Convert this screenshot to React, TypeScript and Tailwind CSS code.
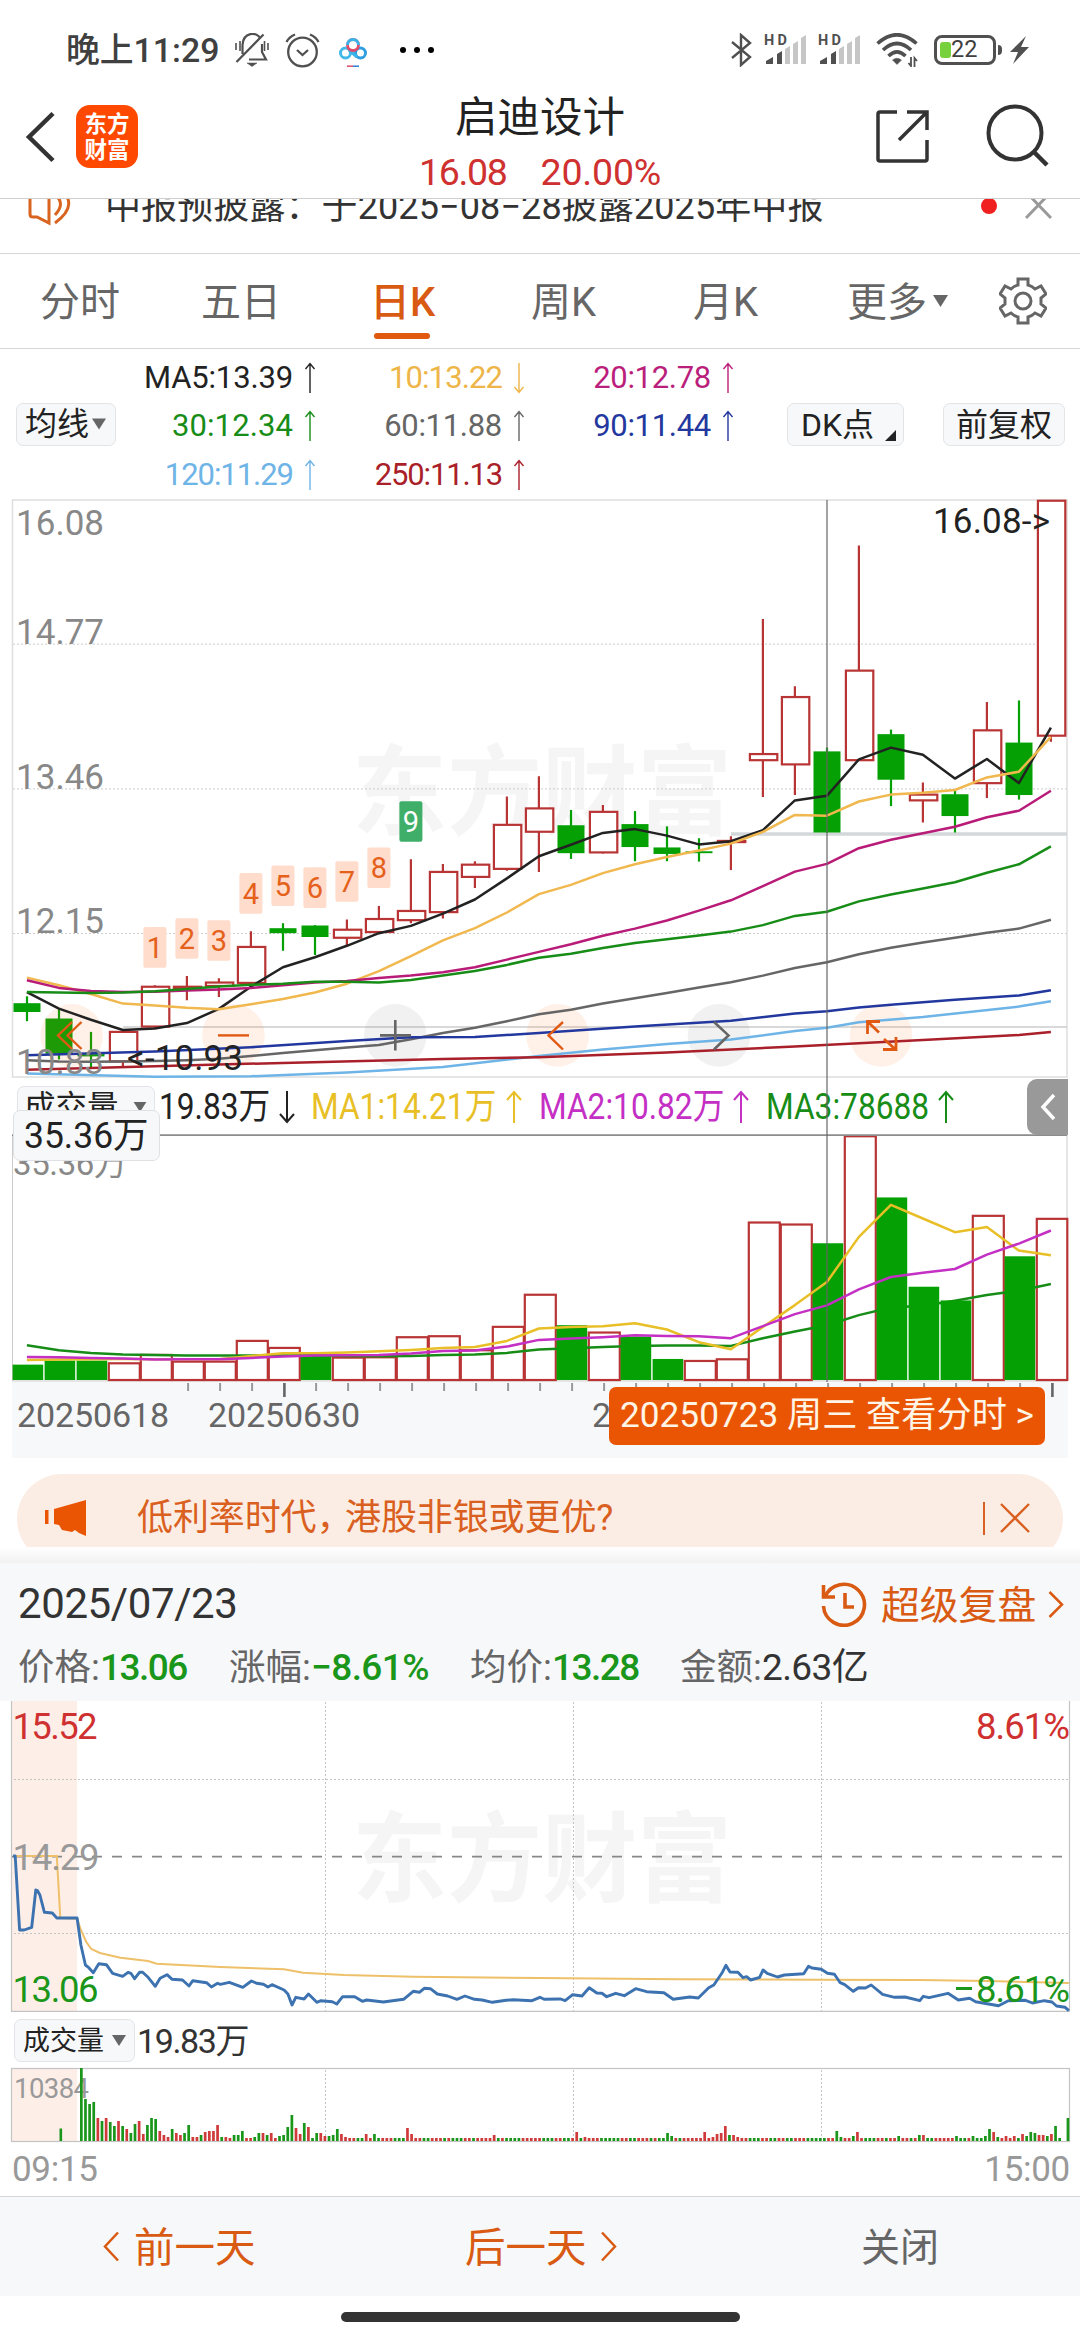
import type { ReactNode } from "react";

const FONT = "font-['Roboto','Noto_Sans_CJK_SC',sans-serif]";
const SVG_FONT = "Roboto, 'Noto Sans CJK SC', sans-serif";

/* ---------- shared chart helpers ---------- */

const cx = (i: number) => 26.9 + 32 * i;
const ky = (v: number) => 490 + v * 0.3827;
const vy = (v: number) => 1060 + v * 0.3344;

type Pair = [number, number];

const spread = (vals: number[]): Pair[] => vals.map((v, i) => [i, v]);
const line = (pts: Pair[], y: (v: number) => number) =>
  pts.map(([i, v]) => `${cx(i).toFixed(1)},${y(v).toFixed(1)}`).join(" ");

type Candle = ["r" | "g", number, number, number, number];

const candles: Candle[] = [
  ["g", 1323, 1341, 1364, 1388],
  ["g", 1357, 1381, 1473, 1488],
  ["g", 1416, 1474, 1480, 1508],
  ["r", 1413, 1416, 1493, 1505],
  ["r", 1294, 1298, 1402, 1408],
  ["r", 1270, 1298, 1303, 1333],
  ["r", 1276, 1287, 1296, 1325],
  ["r", 1153, 1194, 1288, 1290],
  ["g", 1132, 1145, 1158, 1204],
  ["g", 1137, 1138, 1168, 1215],
  ["r", 1122, 1149, 1170, 1190],
  ["r", 1087, 1121, 1155, 1157],
  ["r", 965, 1100, 1124, 1132],
  ["r", 977, 998, 1103, 1120],
  ["r", 970, 979, 1011, 1040],
  ["r", 801, 875, 990, 995],
  ["r", 748, 832, 893, 998],
  ["g", 836, 876, 949, 964],
  ["r", 823, 841, 947, 950],
  ["g", 839, 873, 933, 970],
  ["g", 879, 934, 951, 970],
  ["g", 910, 944, 949, 971],
  ["r", 905, 917, 920, 993],
  ["r", 337, 690, 706, 802],
  ["r", 513, 541, 717, 797],
  ["g", 673, 683, 895, 895],
  ["r", 145, 472, 706, 708],
  ["g", 626, 638, 757, 826],
  ["r", 764, 796, 811, 869],
  ["g", 786, 795, 852, 895],
  ["r", 554, 628, 766, 805],
  ["g", 550, 660, 797, 809],
  ["r", 28, 28, 642, 658],
];

const priceLines: { color: string; pts: Pair[] }[] = [
  {
    color: "#6fb4e6",
    pts: [[0, 1525], [4, 1533], [7, 1532], [10, 1522], [13, 1508], [16, 1479], [18, 1462], [20, 1448], [22, 1436], [24, 1414], [25, 1405], [26, 1391], [28, 1377], [31, 1350], [32, 1336]],
  },
  {
    color: "#a91f2a",
    pts: [[0, 1515], [4, 1506], [8, 1497], [13, 1487], [16, 1482], [20, 1470], [24, 1454], [28, 1437], [31, 1424], [32, 1416]],
  },
  {
    color: "#666666",
    pts: spread([1490, 1493, 1494, 1493, 1492, 1490, 1486, 1479, 1471, 1464, 1457, 1450, 1435, 1419, 1405, 1388, 1370, 1358, 1342, 1328, 1314, 1300, 1286, 1269, 1249, 1234, 1213, 1196, 1182, 1170, 1157, 1146, 1123]),
  },
  {
    color: "#23389e",
    pts: [[0, 1477], [4, 1467], [7, 1456], [10, 1440], [12, 1430], [14, 1429], [16, 1419], [19, 1402], [22, 1387], [24, 1368], [25, 1362], [26, 1352], [27, 1345], [29, 1332], [31, 1321], [32, 1307]],
  },
  {
    color: "#222222",
    pts: spread([1312, 1355, 1384, 1411, 1407, 1393, 1356, 1298, 1247, 1221, 1191, 1158, 1139, 1107, 1070, 1015, 957, 927, 896, 886, 903, 926, 918, 889, 811, 799, 704, 673, 692, 754, 703, 766, 621]),
  },
  {
    color: "#f0b84e",
    pts: spread([1274, 1294, 1317, 1342, 1347, 1353, 1357, 1344, 1330, 1313, 1290, 1257, 1218, 1177, 1145, 1104, 1056, 1032, 1001, 978, 959, 942, 924, 893, 849, 851, 814, 796, 791, 784, 751, 736, 645]),
  },
  {
    color: "#b81b78",
    pts: spread([1281, 1301, 1309, 1312, 1311, 1308, 1305, 1301, 1294, 1287, 1283, 1275, 1269, 1260, 1247, 1227, 1207, 1187, 1165, 1146, 1125, 1099, 1072, 1035, 997, 977, 936, 914, 897, 880, 855, 838, 786]),
  },
  {
    color: "#178d17",
    pts: spread([1312, 1313, 1314, 1313, 1310, 1304, 1297, 1293, 1290, 1285, 1285, 1287, 1280, 1269, 1257, 1241, 1222, 1212, 1197, 1184, 1174, 1164, 1154, 1137, 1113, 1102, 1075, 1057, 1041, 1025, 1000, 978, 931]),
  },
];

const countMarks: { i: number; top: number }[] = [
  { i: 4, top: 1142 },
  { i: 5, top: 1119 },
  { i: 6, top: 1124 },
  { i: 7, top: 1001 },
  { i: 8, top: 981 },
  { i: 9, top: 986 },
  { i: 10, top: 970 },
  { i: 11, top: 934 },
  { i: 12, top: 813 },
];

const volumes: ["r" | "g", number][] = [
  ["g", 911], ["g", 899], ["g", 899], ["r", 907], ["r", 882], ["r", 902], ["r", 902], ["r", 840], ["r", 861], ["g", 882], ["r", 890],
  ["r", 889], ["r", 829], ["r", 826], ["r", 868], ["r", 798], ["r", 702], ["g", 793], ["r", 815], ["g", 827], ["g", 894], ["r", 900],
  ["r", 895], ["r", 486], ["r", 492], ["g", 548], ["r", 228], ["g", 411], ["g", 678], ["g", 719], ["r", 466], ["g", 587], ["r", 475],
];

const slowVolume = [853, 868, 876, 881, 882, 884, 884, 884, 884, 883, 885, 886, 885, 882, 881, 876, 866, 862, 858, 855, 854, 854, 855, 832, 812, 793, 763, 740, 735, 720, 703, 690, 670];

const volumeLines = [
  {
    color: "#e8bf26",
    vals: [897, 896, 895, 894, 895, 895, 895, 885, 877, 877, 875, 871, 867, 861, 858, 840, 803, 798, 796, 787, 806, 844, 865, 798, 733, 664, 529, 433, 474, 515, 499, 570, 584],
  },
  {
    color: "#c42fc4",
    vals: [888, 889, 891, 893, 896, 895, 895, 891, 887, 884, 883, 882, 878, 870, 869, 857, 837, 833, 829, 823, 825, 826, 832, 796, 760, 734, 686, 649, 636, 625, 582, 549, 510],
  },
];

const Watermark = ({ y }: { y: number }) => (
  <text x="352" y={y} fontSize="98" fontWeight="700" fill="#f5f5f5" fontFamily="'Noto Sans CJK SC', sans-serif" textLength="380" lengthAdjust="spacingAndGlyphs">
    东方财富
  </text>
);

function PriceChart() {
  return (
    <svg className="block h-[585px] w-full shrink-0" viewBox="0 495 1080 585" fontFamily={SVG_FONT}>
      <Watermark y={827} />
      <g stroke="#cccccc" strokeWidth="1" strokeDasharray="2 2">
        <path d="M13 644.2H1067M13 788.9H1067M13 933.5H1067" />
      </g>
      <rect x="12.5" y="500" width="1054.5" height="577" fill="none" stroke="#dedede" strokeWidth="1.5" />
      <path d="M123 1027H1067" stroke="#cccccc" strokeWidth="1.5" />
      <path d="M731 834H1067" stroke="#d5d8db" strokeWidth="3.5" />
      {candles.map(([kind, high, top, bot, low], i) => {
        const x = cx(i);
        if (kind === "g") {
          return (
            <g key={i} fill="#04a004">
              <rect x={x - 1} y={ky(high)} width="2.2" height={ky(low) - ky(high)} />
              <rect x={x - 13.4} y={ky(top)} width="27" height={ky(bot) - ky(top)} />
            </g>
          );
        }
        return (
          <g key={i} stroke="#b93434" strokeWidth="2.2" fill="#ffffff">
            <path d={`M${x} ${ky(high)}V${ky(top)}M${x} ${ky(bot)}V${ky(low)}`} />
            <rect x={x - 13} y={ky(top)} width="27.4" height={ky(bot) - ky(top)} />
          </g>
        );
      })}
      {[71.6, 233.5, 395.3, 557.6, 719, 881].map((x, i) => (
        <circle key={x} cx={x} cy="1035.4" r="31.3" fill={i === 2 || i === 4 ? "#666666" : "#ff6a1a"} fillOpacity={i === 2 || i === 4 ? 0.09 : 0.1} />
      ))}
      {priceLines.map(({ color, pts }) => (
        <polyline key={color} points={line(pts, ky)} fill="none" stroke={color} strokeWidth="2.5" strokeLinejoin="round" />
      ))}
      <g fill="none" stroke="#e05a14" strokeWidth="2.4">
        <path d="M72 1022L58 1035.500L72 1049M81.500 1022L67.500 1035.500L81.500 1049" />
        <path d="M218 1035.400H249" />
        <path d="M563 1022L548.500 1035.400L563 1049.500" />
        <path strokeWidth="2.8" d="M880 1021.500H867.500V1034M867.500 1021.500L879 1032.500M884 1039L895 1049M883 1049.500H896V1037" />
      </g>
      <g fill="none" stroke="#666666" strokeWidth="2.6">
        <path d="M380 1035.400H411M395.300 1020V1050.500" />
        <path d="M714 1022L728.500 1035.400L714 1049.500" />
      </g>
      {countMarks.map(({ i, top }, n) => (
        <g key={i}>
          <rect x={cx(i) - 11.5} y={ky(top)} width="23" height="40.6" rx="2" fill={n === 8 ? "#3fae68" : "#ffdccb"} />
          <text x={cx(i)} y={ky(top) + 31} fontSize="29" textAnchor="middle" fill={n === 8 ? "#ffffff" : "#e5601a"}>
            {n + 1}
          </text>
        </g>
      ))}
      <g fontSize="35" fill="#888888">
        <text x="16" y="535" textLength="88">16.08</text>
        <text x="16" y="644" textLength="88">14.77</text>
        <text x="16" y="788.500" textLength="88">13.46</text>
        <text x="16" y="933" textLength="88">12.15</text>
        <text x="16" y="1073.500" textLength="88">10.83</text>
      </g>
      <g fontSize="35" fill="#222222">
        <text x="127" y="1069.800" textLength="116">{"<-10.93"}</text>
        <text x="933" y="532.500" textLength="117">{"16.08->"}</text>
      </g>
    </svg>
  );
}

const volumeBar = (kind: "r" | "g", top: number, i: number) => {
  const x = 11.8 + 32 * i;
  return kind === "g" ? (
    <rect key={i} x={x + 0.8} y={vy(top)} width="30.6" height={vy(957) - vy(top)} fill="#04a004" />
  ) : (
    <rect key={i} x={x + 1} y={vy(top)} width={i === 32 ? 30.5 : 31} height={vy(957) - vy(top)} fill="#ffffff" stroke="#b93434" strokeWidth="2.2" />
  );
};

function VolumeChart() {
  return (
    <svg className="block h-[248px] w-full shrink-0" viewBox="0 1134 1080 248" fontFamily={SVG_FONT}>
      <path d="M12.500 1135V1381H1067V1135" fill="none" stroke="#cccccc" strokeWidth="1" />
      <text x="13" y="1175" fontSize="33" fill="#888888" textLength="114">35.36万</text>
      {volumes.map(([kind, top], i) => (kind === "r" ? volumeBar(kind, top, i) : null))}
      <polyline points={line(spread(slowVolume), vy)} fill="none" stroke="#178d17" strokeWidth="2.5" strokeLinejoin="round" />
      {volumes.map(([kind, top], i) => (kind === "g" ? volumeBar(kind, top, i) : null))}
      {volumeLines.map(({ color, vals }) => (
        <polyline key={color} points={line(spread(vals), vy)} fill="none" stroke={color} strokeWidth="2.5" strokeLinejoin="round" />
      ))}
      <path d="M12 1135.200H1067" stroke="#8c8c8c" strokeWidth="1.800" />
    </svg>
  );
}

/* ---------- intraday data ---------- */

const intraday: Pair[] = [
  [38, 498], [44, 498], [57, 720], [70, 720], [92, 712], [104, 600], [109, 602], [116, 615], [129, 667], [152, 669], [165, 684], [224, 684],
  [235, 765], [248, 825], [258, 833], [271, 848], [287, 821], [309, 824], [327, 850], [356, 859], [372, 847], [380, 850], [391, 866], [405, 847],
  [414, 847], [430, 862], [451, 889], [465, 865], [485, 854], [500, 868], [530, 870], [549, 888], [560, 872], [600, 878], [614, 891], [632, 880],
  [640, 883], [666, 877], [705, 892], [730, 873], [745, 880], [765, 883], [778, 891], [790, 884], [825, 900], [836, 912], [848, 945], [859, 922],
  [883, 927], [896, 912], [920, 937], [932, 932], [965, 935], [978, 942], [995, 920], [1030, 920], [1052, 934], [1065, 930], [1113, 936],
  [1172, 928], [1200, 904], [1218, 907], [1232, 895], [1250, 896], [1270, 912], [1300, 918], [1327, 928], [1350, 918], [1378, 928], [1400, 930],
  [1430, 937], [1470, 931], [1490, 929], [1545, 932], [1568, 922], [1580, 928], [1628, 927], [1641, 932], [1663, 914], [1690, 918], [1711, 893],
  [1733, 909], [1748, 910], [1762, 920], [1788, 910], [1813, 917], [1846, 896], [1878, 905], [1928, 908], [1955, 928], [2003, 921], [2028, 924],
  [2058, 893], [2073, 885], [2096, 850], [2108, 826], [2120, 846], [2143, 847], [2158, 863], [2168, 860], [2180, 870], [2206, 862], [2216, 840],
  [2228, 850], [2258, 861], [2278, 855], [2334, 851], [2348, 829], [2358, 834], [2385, 838], [2403, 850], [2423, 853], [2440, 878], [2453, 884],
  [2478, 904], [2493, 893], [2513, 894], [2530, 885], [2563, 913], [2598, 922], [2628, 921], [2671, 932], [2681, 919], [2698, 923], [2753, 910],
  [2783, 930], [2816, 925], [2833, 935], [2900, 947], [2928, 932], [2978, 931], [2998, 939], [3033, 932], [3055, 936], [3068, 948], [3093, 952], [3104, 962],
];

const average: Pair[] = [
  [40, 498], [165, 498], [175, 684], [224, 686], [235, 720], [250, 755], [265, 777], [290, 789], [350, 803], [430, 813], [455, 821], [640, 831],
  [825, 838], [880, 848], [1000, 855], [1200, 860], [1568, 864], [1968, 868], [2368, 869], [2668, 870], [2868, 873], [3104, 879],
];

const minutePath = (pts: Pair[]) => pts.map(([x, y]) => `${(x / 2.904).toFixed(1)},${(1690 + y / 3).toFixed(1)}`).join(" ");

function IntradayChart() {
  return (
    <svg className="block h-[313px] w-full shrink-0" viewBox="0 1701 1080 313" fontFamily={SVG_FONT}>
      <rect x="12" y="1701" width="65" height="310" fill="#fdeee8" />
      <Watermark y={1894} />
      <g stroke="#c4c4c4" strokeWidth="1" strokeDasharray="2 2">
        <path d="M14 1779.500H1068M14 1933.500H1068" />
        <path d="M325.500 1702V2011M573.500 1702V2011M821.500 1702V2011" />
      </g>
      <path d="M12 1856.700H1068" stroke="#888888" strokeWidth="1.800" strokeDasharray="10 10" />
      <path d="M11.500 1701V2011.300H1069.500V1701" fill="none" stroke="#c4c4c4" strokeWidth="1.200" />
      <polyline points={minutePath(average)} fill="none" stroke="#eec069" strokeWidth="2" />
      <polyline points={minutePath(intraday)} fill="none" stroke="#3d72b0" strokeWidth="2.900" strokeLinejoin="round" />
      <g fontSize="36.500">
        <text x="12.500" y="1739" fill="#cf3030" textLength="85">15.52</text>
        <text x="12.500" y="1870" fill="#999999" textLength="87">14.29</text>
        <text x="12.500" y="2001.500" fill="#1a961a" textLength="86">13.06</text>
        <text x="976" y="1739" fill="#cf3030" textLength="94">8.61%</text>
        <text x="976" y="2001.500" fill="#1a961a" textLength="94">8.61%</text>
      </g>
      <path d="M956 1988.500H972" stroke="#1a961a" strokeWidth="3" />
    </svg>
  );
}

const openingBars = "73g 42g 37g 39g 23r 20g 23r 19g 15g 20r 15g 12r 8g 17g 20r 7r 16g 23g 22g 10r 6r 4r 12g 8r 6r 8g 16g 4r 4r 6g 9r 10r 10r 16r 4g 4r 3r 6g 6g 10g 3r 3r 4g 8g 8r 6g 8r 3r 5g 6g 14g 26g 13r 7r 18g 14r 3g 8g 8r 5r 5g 6g 12g 7r 4r"
  .split(" ");

const spikes: Record<number, string> = {
  69: "7r", 71: "7g", 79: "13r", 80: "7r", 100: "6r", 120: "9r", 122: "4r", 142: "8g", 143: "5g", 151: "9r", 153: "4r", 154: "7r", 155: "8r",
  156: "15r", 157: "6g", 158: "6r", 159: "4r", 183: "10g", 184: "4g", 187: "5g", 188: "9r", 198: "5g", 203: "6g", 204: "6r", 212: "5g", 216: "5g",
  219: "5g", 220: "12g", 221: "9r", 222: "4g", 224: "5r", 226: "5r", 228: "7r", 229: "5g", 230: "9g", 231: "8g", 232: "6r", 233: "6r", 234: "5g",
  235: "7r", 236: "15g", 237: "3g", 239: "23g",
};

const redRuns = "rgrggggrrrrrgggrrggrrggrrrgggggrrggrrrgrgggrrgrrrr";

function MinuteVolume() {
  const bars = Array.from({ length: 240 }, (_, i) => openingBars[i] ?? spikes[i] ?? (i === 238 ? "0g" : `3${redRuns[i % redRuns.length]}`));
  return (
    <svg className="block h-[76px] w-full shrink-0" viewBox="0 2067 1080 76" fontFamily={SVG_FONT}>
      <rect x="12" y="2069" width="65" height="72" fill="#fdeee8" />
      <path d="M325.500 2070V2141M573.500 2070V2141M821.500 2070V2141" stroke="#c4c4c4" strokeDasharray="2 2" />
      <rect x="11.500" y="2068.500" width="1058" height="73" fill="none" stroke="#c4c4c4" strokeWidth="1.200" />
      <text x="14" y="2098" fontSize="27.500" fill="#999999" textLength="75">10384</text>
      <rect x="59.500" y="2128.500" width="2.600" height="12.500" fill="#1a961a" />
      {bars.map((b, i) => {
        const h = parseInt(b, 10);
        return <rect key={i} x={80 + i * 4.128} y={2141 - h} width="2.700" height={h} fill={b.endsWith("r") ? "#cf3b3b" : "#1a961a"} />;
      })}
    </svg>
  );
}

/* ---------- small icons ---------- */

const Arrow = ({ up = true, className = "" }: { up?: boolean; className?: string }) => (
  <svg className={className} viewBox="0 0 12 32" fill="none" stroke="currentColor" strokeWidth="1.400">
    {up ? <path d="M6 31V2M1.500 7L6 1.500L10.500 7" /> : <path d="M6 1V30M1.500 25L6 30.500L10.500 25" />}
  </svg>
);

const WideArrow = ({ up = true }: { up?: boolean }) => (
  <svg className="h-[34px] w-[16px]" viewBox="0 0 16 34" fill="none" stroke="currentColor" strokeWidth="2">
    {up ? <path d="M8 33V2M1 10L8 2L15 10" /> : <path d="M8 1V32M1 24L8 32L15 24" />}
  </svg>
);

const Triangle = ({ className }: { className: string }) => (
  <svg className={className} viewBox="0 0 14 11" fill="#666666">
    <path d="M0 0H14L7 11Z" />
  </svg>
);

const Signal = () => (
  <svg className="h-[34px] w-[42px]" viewBox="0 0 42 34">
    <text x="0" y="11.500" fontSize="14.500" fontWeight="700" fill="#505050" fontFamily="Roboto, sans-serif" textLength="23">HD</text>
    <path d="M2 31V28L9 24V31ZM13 31V21L18 18V31Z" fill="#505050" />
    <path d="M21 31V16L26 13V31ZM29 31V11L34 8V31ZM37 31V5L42 2V31Z" fill="#c6c6c6" />
  </svg>
);

function StatusBar() {
  return (
    <div className="flex h-[100px] shrink-0 items-center pl-[66px] text-[#404040]">
      <div className="w-[169px] pt-[2px] text-[33.800px] leading-[34px] font-medium whitespace-nowrap">晚上11:29</div>
      <svg className="mr-4 h-[34px] w-[34px]" viewBox="0 0 34 34" fill="none" stroke="#505050" strokeWidth="2.200">
        <path d="M7.500 21V12C8 -1 22 -1.500 25 5M27 11V19L31 26.500H14M1.500 29L28.500 1.500" />
        <path d="M1 10V17M5 8V18M33 10V17M29.500 8V18" strokeWidth="1.600" />
        <path d="M12 30H22L17 33.500Z" fill="#505050" strokeWidth="0.500" />
      </svg>
      <svg className="mr-4 h-[35px] w-[35px]" viewBox="0 0 35 35" fill="none" stroke="#505050" strokeWidth="2.300">
        <circle cx="17.500" cy="19" r="14.300" />
        <path d="M12 17L17.500 22L23 17M1.500 9Q4 4 10 1.500M33.500 9Q31 4 25 1.500" />
      </svg>
      <svg className="h-[34px] w-[34px]" viewBox="0 0 34 34" fill="none" strokeWidth="3">
        <circle cx="9.500" cy="20" r="5" stroke="#42b9ea" />
        <circle cx="24.500" cy="20" r="5" stroke="#2f9fe0" />
        <path d="M13 17L21 24" stroke="#3ab4e8" />
        <circle cx="17" cy="12" r="5.500" stroke="#e04a6c" strokeWidth="2.800" />
        <path d="M11.500 12A5.500 5.500 0 0 1 22.500 12" stroke="#3ab4e8" />
        <path d="M11 33.200H17" stroke="#e04a6c" strokeWidth="1.500" />
        <path d="M17 33.200H23" stroke="#2f7fd0" strokeWidth="1.500" />
      </svg>
      <div className="ml-[30px] flex w-[34px] justify-between">
        <i className="h-1.5 w-1.5 rounded-full bg-black" />
        <i className="h-1.5 w-1.5 rounded-full bg-black" />
        <i className="h-1.5 w-1.5 rounded-full bg-black" />
      </div>
      <div className="ml-auto flex items-center pr-[51px]">
        <svg className="mr-3 h-[34px] w-[21px]" viewBox="0 0 21 34" fill="none" stroke="#505050" strokeWidth="2.400">
          <path d="M1 9L19 24L10 32V2L19 10L1 25" />
        </svg>
        <Signal />
        <div className="w-3" />
        <Signal />
        <svg className="ml-[16px] h-[34px] w-[42px]" viewBox="0 0 42 34" fill="none" stroke="#505050" strokeWidth="3.600">
          <path d="M1.500 10.500Q21 -7 40.500 10.500M7 17Q21 4 35 17M12.500 23Q21 14.500 29.500 23" />
          <path d="M16.500 27Q21 23.500 25.500 27L21 31.500Z" fill="#505050" strokeWidth="0.500" />
          <path d="M35 24V33L32.500 30M38.500 34V25L41 28" strokeWidth="1.800" />
        </svg>
        <div className="ml-4 flex h-[30px] w-[62px] items-center rounded-[8px] border-[3.500px] border-[#505050] pl-[3px] leading-none text-[#404040]">
          <span className="h-4 w-[11px] rounded-[3px] bg-[#76d13c]" />
          <span className="text-[23.500px]">22</span>
        </div>
        <span className="ml-0.5 h-2.5 w-[4px] rounded-r bg-[#505050]" />
        <svg className="ml-2 h-[28px] w-[19px]" viewBox="0 0 19 28" fill="#505050">
          <path d="M16 0L0 16H8L3 28L19 11H11Z" />
        </svg>
      </div>
    </div>
  );
}

function Header() {
  return (
    <div className="flex h-[99px] shrink-0 items-start border-b border-[#cfcfcf] pl-[25px]">
      <svg className="mt-[11px] h-[52px] w-[30px]" viewBox="0 0 30 52" fill="none" stroke="#333333" strokeWidth="4.500">
        <path d="M28 2.500L4 26L28 49.500" />
      </svg>
      <div className="mt-[5px] ml-[21px] flex h-[63px] w-[62px] flex-col items-center justify-center rounded-[14px] bg-[#ff4800] text-[22.500px] leading-[26px] font-bold text-white">
        <span>东方</span>
        <span>财富</span>
      </div>
      <div className="ml-[240px] flex w-[324px] flex-col items-center">
        <div className="-mt-[6px] text-[42.500px] leading-[48px] whitespace-nowrap text-[#222222]">启迪设计</div>
        <div className="mt-[8px] flex gap-[34px] text-[37.500px] leading-[44px] text-[#cf3030]">
          <span className="tracking-[-1.300px]">16.08</span>
          <span className="tracking-[-0.200px]">20.00%</span>
        </div>
      </div>
      <svg className="mt-[8px] ml-[173px] h-[56px] w-[56px]" viewBox="0 0 56 56" fill="none" stroke="#333333" strokeWidth="3.500">
        <path d="M22 4H5Q3 4 3 6V51Q3 53 5 53H50Q52 53 52 51V32M32 4H52V22M52 4L24 32" />
      </svg>
      <svg className="mt-[3px] ml-[55px] h-[66px] w-[64px]" viewBox="0 0 64 66" fill="none" stroke="#333333" strokeWidth="4">
        <circle cx="29" cy="30" r="26.500" />
        <path d="M48 49L61 62" strokeWidth="4.500" />
      </svg>
    </div>
  );
}

function Notice() {
  return (
    <div className="h-[55px] shrink-0 overflow-hidden border-b border-[#d6d6d6]">
      <div className="-mt-[17px] flex h-[48px] items-center pl-[28px]">
        <svg className="mr-[30px] h-[44px] w-[47px]" viewBox="0 0 47 44" fill="none" stroke="#d96420" strokeWidth="3">
          <path d="M2 10V30Q2 33 5 33H9L21 39V1L9 9H2" />
          <path d="M27 11Q38 19 27 31M28 2Q54 19 27 39" />
        </svg>
        <div className="w-[882px] pt-[2px] text-[36px] leading-[48px] tracking-[0.100px] whitespace-nowrap text-[#333333]">中报预披露：于2025−08−28披露2025年中报</div>
        <i className="ml-[-6px] h-4 w-4 rounded-full bg-[#f02020]" />
        <svg className="ml-[28px] h-[28px] w-[27px]" viewBox="0 0 27 28" fill="none" stroke="#999999" strokeWidth="3">
          <path d="M1 0L26 26M26 0L1 26" />
        </svg>
      </div>
    </div>
  );
}

function Tabs() {
  return (
    <div className="flex h-[95px] shrink-0 items-center border-b border-[#d6d6d6] pt-[4px] pl-[40px] text-[40px] leading-[50px] whitespace-nowrap text-[#666666]">
      <div className="w-[161px]">分时</div>
      <div className="w-[169px]">五日</div>
      <div className="relative w-[161px] font-medium text-[#d95a12]">
        日K
        <i className="absolute top-[55px] left-[4px] h-[6px] w-[56px] rounded-full bg-[#e0590f]" />
      </div>
      <div className="w-[162px]">周K</div>
      <div className="w-[154px]">月K</div>
      <div className="w-[86px]">更多</div>
      <Triangle className="mb-[4px] h-[12px] w-[15px]" />
      <svg className="mb-[4px] ml-[51px] h-[48px] w-[48px]" viewBox="0 0 48 48" fill="none" stroke="#666666" strokeWidth="3">
        <path d="M19 2H29V8Q33 9 36 12L42 9L47 17L42 21V27L47 31L42 39L36 36Q33 39 29 40V46H19V40Q15 39 12 36L6 39L1 31L6 27V21L1 17L6 9L12 12Q15 9 19 8Z" />
        <circle cx="24" cy="24" r="8" />
      </svg>
    </div>
  );
}

const averages = [
  ["MA5:13.39", "text-[#222222] tracking-[-0.150px]", 1],
  ["10:13.22", "text-[#eeb548] tracking-[-0.900px]", 0],
  ["20:12.78", "text-[#bb1f7c] tracking-[-0.300px]", 1],
  ["30:12.34", "text-[#178d17] tracking-[0.100px]", 1],
  ["60:11.88", "text-[#666666] tracking-[-0.300px]", 1],
  ["90:11.44", "text-[#23389e] tracking-[-0.300px]", 1],
  ["120:11.29", "text-[#6fb4e6] tracking-[-1.050px]", 1],
  ["250:11.13", "text-[#a91f2a] tracking-[-1.150px]", 1],
] as const;

const Chip = ({ className, children }: { className: string; children: ReactNode }) => (
  <div className={`flex items-center rounded-[7px] border border-[#e2e4e7] bg-[#f7f8fa] text-[32px] leading-[40px] whitespace-nowrap text-[#222222] ${className}`}>{children}</div>
);

function AverageLegend() {
  return (
    <div className="flex h-[146px] shrink-0 items-center pl-[16px]">
      <Chip className="mt-[4px] h-[43px] w-[100px] pl-[8px]">
        均线
        <Triangle className="ml-[3px] h-[12px] w-[14px]" />
      </Chip>
      <div className="mt-[8px] grid w-[618px] grid-cols-[200px_209px_209px] grid-rows-[48px_49px_48px]">
        {averages.map(([label, color, up]) => (
          <div key={label} className={`flex items-center justify-end gap-[11px] text-[31px] leading-[40px] ${color}`}>
            {label}
            <Arrow up={up === 1} className="h-[32px] w-[12px]" />
          </div>
        ))}
      </div>
      <Chip className="mt-[5px] ml-[53px] h-[43px] w-[117px] pl-[13px]">
        DK点
        <svg className="mt-[22px] ml-[11px] h-[11px] w-[11px]" viewBox="0 0 11 11" fill="#222222">
          <path d="M11 0V11H0Z" />
        </svg>
      </Chip>
      <Chip className="mt-[5px] ml-[39px] h-[43px] w-[122px] justify-center">前复权</Chip>
    </div>
  );
}

const volumeLegend = [
  { text: "19.83万", up: false, cls: "text-[#222222] w-[152px]", label: "w-[120px]" },
  { text: "MA1:14.21万", up: true, cls: "text-[#e8bf26] w-[228px]", label: "w-[195px]" },
  { text: "MA2:10.82万", up: true, cls: "text-[#c42fc4] w-[227px]", label: "w-[194px]" },
  { text: "MA3:78688", up: true, cls: "text-[#178d17] w-[190px]", label: "w-[172px]" },
];

function VolumeLegend() {
  return (
    <div className="flex h-[54px] shrink-0 items-center pl-[17px]">
      <div className="mt-[6px] flex h-[48px] w-[138px] items-start rounded-[7px] border border-[#e2e4e7] bg-[#f7f8fa] pl-[6px] text-[31.500px] leading-[42px] whitespace-nowrap text-[#222222]">
        成交量
        <Triangle className="mt-[15px] ml-[14px] h-[10px] w-[14px]" />
      </div>
      <div className="flex pl-[4px]">
        {volumeLegend.map(({ text, up, cls, label }) => (
          <div key={text} className={`flex items-center ${cls}`}>
            <div className={`shrink-0 text-[36px] leading-[50px] whitespace-nowrap ${label}`}>
              <span className="inline-block origin-left scale-x-[0.880]">{text}</span>
            </div>
            <WideArrow up={up} />
          </div>
        ))}
      </div>
    </div>
  );
}

function DateAxis() {
  return (
    <div className="relative ml-[12px] h-[76px] w-[1056px] shrink-0 bg-[#f7f8fa]">
      <svg className="block h-[15px] w-full" viewBox="12 1382 1056 15">
        {Array.from({ length: 28 }, (_, k) => {
          const i = k + 5;
          const major = i === 8 || i === 32;
          return <rect key={i} x={cx(i) + 0.2} y="1383" width={major ? 2.600 : 2} height={major ? 14 : 8} fill={major ? "#666666" : "#999999"} />;
        })}
      </svg>
      <div className="-mt-[2px] flex pl-[5px] text-[34px] leading-[40px] tracking-[-0.100px] text-[#666666]">
        <span className="w-[191px]">20250618</span>
        <span className="w-[384px]">20250630</span>
        <span>2</span>
      </div>
      <div className="absolute top-[5px] left-[597px] flex h-[58px] w-[436px] items-center justify-center rounded-[7px] bg-[#ea5504] pb-[3px] text-[35.200px] leading-[50px] whitespace-nowrap text-[#fff5e6]">
        20250723 周三 查看分时 &gt;
      </div>
    </div>
  );
}

function KLinePanel() {
  return (
    <div className="relative flex shrink-0 flex-col">
      <PriceChart />
      <VolumeLegend />
      <VolumeChart />
      <div className="absolute top-[5px] left-[826px] h-[882px] w-[1.500px] bg-[#666666]/60" />
      <div className="absolute top-[615px] left-[13px] flex h-[51px] w-[147px] items-center rounded-[7px] border border-[#dfe1e4] bg-[#f7f8fa] pl-[10px] text-[36px] leading-[50px] text-[#222222]">
        <span className="inline-block origin-left scale-x-[0.985] whitespace-nowrap">35.36万</span>
      </div>
      <div className="absolute top-[584px] left-[1027px] flex h-[56px] w-[41px] items-center justify-center rounded-l-[10px] bg-[#999999]">
        <svg className="h-[28px] w-[16px]" viewBox="0 0 16 28" fill="none" stroke="#ffffff" strokeWidth="3.500">
          <path d="M14 2L3 14L14 26" />
        </svg>
      </div>
      <DateAxis />
    </div>
  );
}

function Banner() {
  return (
    <div className="mx-[17px] mt-[16px] h-[73px] shrink-0 overflow-hidden">
      <div className="flex h-[90px] items-center rounded-full bg-[#fcede4] pb-[2px] pl-[28px] text-[#d96020]">
        <svg className="h-[36px] w-[41px]" viewBox="0 0 41 36" fill="#ea5504">
          <path d="M0 10H3.500V24H0ZM9 9L41 0V36L34 33L30 30L27 32L17 30L14 25L9 24Z" />
        </svg>
        <div className="ml-[51px] flex w-[846px] text-[36px] leading-[48px] tracking-[-0.100px] whitespace-nowrap">
          <span className="w-[208px]">低利率时代，</span>
          <span>港股非银或更优?</span>
        </div>
        <i className="h-[33px] w-[1.500px] bg-[#d96020]" />
        <svg className="ml-[15px] h-[30px] w-[30px]" viewBox="0 0 30 30" fill="none" stroke="#d96020" strokeWidth="2.400">
          <path d="M1 1L29 29M29 1L1 29" />
        </svg>
      </div>
    </div>
  );
}

const Stat = ({ name, value, className, color }: { name: string; value: string; className: string; color: string }) => (
  <div className={`flex items-center whitespace-nowrap ${className}`}>
    <span className="w-[82px] text-[36.500px] text-[#666666]">{name}:</span>
    <span className={`text-[37px] ${color}`}>{value}</span>
  </div>
);

function DayHeader() {
  return (
    <div className="shrink-0">
      <div className="h-[16px] bg-gradient-to-b from-white to-[#f1f1f2]" />
      <div className="h-[138px] bg-[#f7f8fa] pt-[15px]">
        <div className="flex h-[52px] items-center pl-[18px]">
          <div className="w-[803px] text-[42px] leading-[50px] tracking-[-0.400px] text-[#333333]">2025/07/23</div>
          <svg className="h-[46px] w-[46px]" viewBox="0 0 46 46" fill="none" stroke="#d95a12" strokeWidth="3.600">
            <path d="M4 16A20.500 20.500 0 1 1 2.500 25M2.500 4V16H14M24 12V26H33" />
          </svg>
          <div className="ml-[14px] w-[167px] pt-[3px] text-[38.800px] leading-[50px] whitespace-nowrap text-[#d95a12]">超级复盘</div>
          <svg className="h-[27px] w-[16px]" viewBox="0 0 16 27" fill="none" stroke="#d95a12" strokeWidth="2.500">
            <path d="M1.500 1L14 13.500L1.500 26" />
          </svg>
        </div>
        <div className="mt-[13px] flex h-[50px] items-center pl-[18px] leading-[50px]">
          <Stat name="价格" value="13.06" className="w-[211px]" color="font-medium tracking-[-1.500px] text-[#1a961a]" />
          <Stat name="涨幅" value="−8.61%" className="w-[241px]" color="font-medium tracking-[-0.600px] text-[#1a961a]" />
          <Stat name="均价" value="13.28" className="w-[210px]" color="font-medium tracking-[-1.500px] text-[#1a961a]" />
          <Stat name="金额" value="2.63亿" className="" color="tracking-[-0.600px] text-[#333333]" />
        </div>
      </div>
    </div>
  );
}

function VolumeSelect() {
  return (
    <div className="flex h-[53px] shrink-0 items-center pl-[14px]">
      <div className="flex h-[43px] w-[121px] items-center rounded-[7px] border border-[#e2e4e7] bg-[#f7f8fa] pl-[8px] text-[27px] leading-[40px] whitespace-nowrap text-[#222222]">
        成交量
        <Triangle className="ml-[8px] h-[11px] w-[14px]" />
      </div>
      <div className="ml-[2px] text-[34px] leading-[44px] tracking-[-1.400px] text-[#333333]">19.83万</div>
    </div>
  );
}

const Chevron = ({ left = false }: { left?: boolean }) => (
  <svg className="h-[31px] w-[17px]" viewBox="0 0 17 31" fill="none" stroke="#d95a12" strokeWidth="2.500">
    <path d={left ? "M15 1.500L2 15.500L15 29.500" : "M2 1.500L15 15.500L2 29.500"} />
  </svg>
);

function Footer() {
  return (
    <div className="flex h-[100px] shrink-0 items-center border-t border-[#d6d6d6] bg-[#f7f8fa] pl-[103px] text-[40.500px] leading-[50px] whitespace-nowrap text-[#d95a12]">
      <Chevron left />
      <div className="ml-[14px] w-[331px] pt-[3px]">前一天</div>
      <div className="w-[135px] pt-[3px]">后一天</div>
      <Chevron />
      <div className="ml-[244px] pt-[3px] text-[39px] text-[#666666]">关闭</div>
    </div>
  );
}

export default function App() {
  return (
    <div className={`flex h-[2340px] w-[1080px] flex-col overflow-hidden bg-white ${FONT}`}>
      <StatusBar />
      <Header />
      <Notice />
      <Tabs />
      <AverageLegend />
      <KLinePanel />
      <Banner />
      <DayHeader />
      <IntradayChart />
      <VolumeSelect />
      <MinuteVolume />
      <div className="flex h-[53px] shrink-0 items-center justify-between pr-[10px] pl-[12px] text-[35px] leading-[44px] tracking-[-0.300px] text-[#999999]">
        <span>09:15</span>
        <span>15:00</span>
      </div>
      <Footer />
      <div className="mx-auto mt-[16px] h-[10px] w-[399px] rounded-full bg-[#333333]" />
    </div>
  );
}
